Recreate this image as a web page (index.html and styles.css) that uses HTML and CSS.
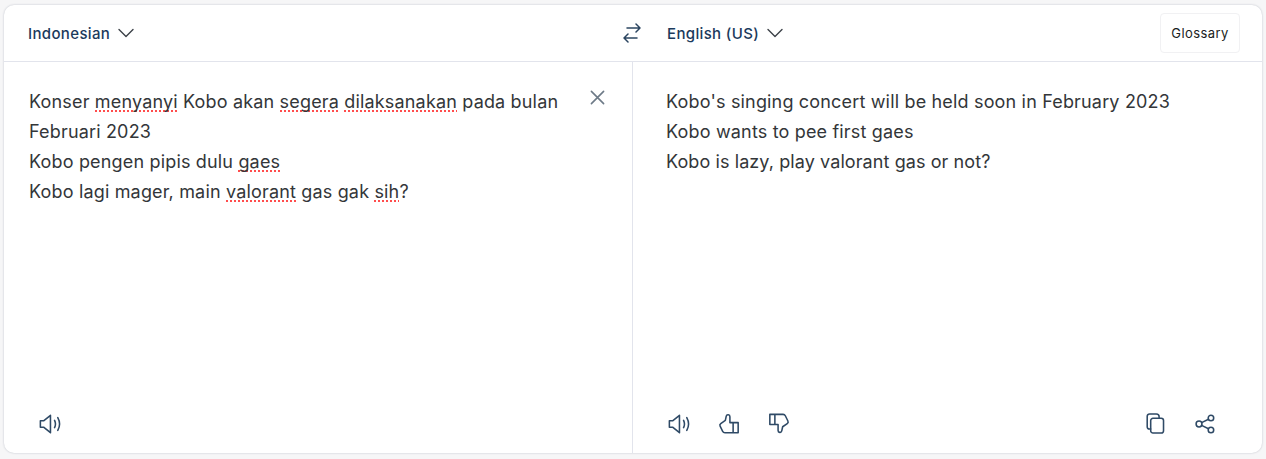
FILE: index.html
```html
<!DOCTYPE html>
<html lang="en">
<head>
<meta charset="utf-8">
<title>Translator</title>
<link rel="stylesheet" href="styles.css">
</head>
<body>
<main class="card">
  <header class="topbar">
    <div class="side side-source">
      <button class="lang">Indonesian
        <svg class="chev" viewBox="0 0 16 10"><path d="M1 1.500 8 8.500 15 1.500"/></svg>
      </button>
    </div>
    <button class="swap" aria-label="Swap languages">
      <svg viewBox="0 0 20 20"><path d="M5 5H18M14 1l4 4-4 4M15 15H2M6 11l-4 4 4 4"/></svg>
    </button>
    <div class="side side-target">
      <button class="lang">English (US)
        <svg class="chev" viewBox="0 0 16 10"><path d="M1 1.500 8 8.500 15 1.500"/></svg>
      </button>
      <button class="glossary">Glossary</button>
    </div>
  </header>
  <section class="panes">
    <div class="pane pane-source">
      <div class="source-row">
        <p class="text">Konser <span class="sp">menyanyi</span> Kobo akan <span class="sp">segera</span> <span class="sp">dilaksanakan</span> pada bulan Februari 2023<br>Kobo pengen pipis dulu <span class="sp">gaes</span><br>Kobo lagi mager, main <span class="sp">valorant</span> gas gak <span class="sp">sih</span>?</p>
        <button class="icon close" aria-label="Clear">
          <svg viewBox="0 0 16 16"><path d="M1.500 1.500 14.500 14.500M14.500 1.500 1.500 14.500"/></svg>
        </button>
      </div>
      <div class="tools">
        <button class="icon" aria-label="Listen"><svg viewBox="0 0 24 24"><path d="M1.500 8.500v7H5l7.500 6v-19L5 8.500zM17 8c1.200 2.500 1.200 5.500 0 8M20.500 5c2.400 4.300 2.400 9.700 0 14"/></svg></button>
      </div>
    </div>
    <div class="pane pane-target">
      <p class="text">Kobo's singing concert will be held soon in February 2023<br>Kobo wants to pee first gaes<br><span class="tight">Kobo is lazy, play valorant gas or not?</span></p>
      <div class="tools tools-target">
        <div class="tool-group">
          <button class="icon" aria-label="Listen"><svg viewBox="0 0 24 24"><path d="M1.500 8.500v7H5l7.500 6v-19L5 8.500zM17 8c1.200 2.500 1.200 5.500 0 8M20.500 5c2.400 4.300 2.400 9.700 0 14"/></svg></button>
          <button class="icon" aria-label="Good translation"><svg viewBox="0 0 24 24"><path d="M16.500 10.500H22v11h-5.500zM16.500 10.500H13V4c0-2.500-3.500-3-4-.5L8 8l-5 3.500c-1 .7-1.200 1.800-.7 2.800l2.800 5.700c.5 1 1.200 1.500 2.400 1.500h9"/></svg></button>
          <button class="icon" aria-label="Bad translation"><svg viewBox="0 0 24 24"><path transform="rotate(180 12 11.500)" d="M16.500 10.500H22v11h-5.500zM16.500 10.500H13V4c0-2.500-3.500-3-4-.5L8 8l-5 3.500c-1 .7-1.200 1.800-.7 2.800l2.800 5.700c.5 1 1.200 1.500 2.400 1.500h9"/></svg></button>
        </div>
        <div class="tool-group">
          <button class="icon" aria-label="Copy"><svg viewBox="0 0 24 24"><path d="M7.300 17.500H6A2.500 2.500 0 0 1 3.500 15V3.500A2.500 2.500 0 0 1 6 1h7.500a3 3 0 0 1 3 3v1.800"/><rect x="7.300" y="5.800" width="14" height="16" rx="2.500"/></svg></button>
          <button class="icon" aria-label="Share"><svg viewBox="0 0 24 24"><circle cx="5.500" cy="12" r="3.200"/><circle cx="18.500" cy="5.500" r="3"/><circle cx="18.500" cy="18.500" r="3"/><path d="M8.300 10.500 15.800 6.800M8.300 13.500 15.800 17.200"/></svg></button>
        </div>
      </div>
    </div>
  </section>
</main>
</body>
</html>
```
FILE: styles.css
```css
* { box-sizing: border-box; }
html, body { height: 100%; }
body {
  margin: 0;
  padding: 5px 4px 6px;
  background: #f6f6f7;
  font-family: Inter, "Liberation Sans", sans-serif;
  overflow: hidden;
}
button {
  border: 0;
  background: none;
  padding: 0;
  margin: 0;
  font: inherit;
  display: flex;
  align-items: center;
}
svg {
  fill: none;
  stroke: #2f4a66;
  stroke-width: 1.7;
  stroke-linecap: round;
  stroke-linejoin: round;
  display: block;
}
.card {
  height: 448px;
  background: #fff;
  border-radius: 10px;
  box-shadow: 0 0 2px rgba(50, 60, 90, .3);
  display: flex;
  flex-direction: column;
}
.topbar {
  height: 57px;
  flex: none;
  display: flex;
  align-items: center;
  border-bottom: 1px solid #e2e4ec;
}
.side { display: flex; align-items: center; }
.side-source { width: 612px; padding-left: 24px; }
.side-target { flex: 1; justify-content: space-between; padding-left: 19px; padding-right: 22px; }
.lang {
  gap: 8px;
  font-size: 15px;
  font-weight: 550;
  letter-spacing: .35px;
  color: #1b3a5c;
}
.chev { width: 16px; height: 10px; stroke: #3c4148; stroke-width: 1.4; }
.swap { width: 32px; justify-content: center; }
.swap svg { width: 20px; height: 20px; stroke: #2b4560; stroke-width: 1.5; }
.glossary {
  height: 40px;
  width: 80px;
  justify-content: center;
  border: 1px solid #f1f1f3;
  border-radius: 4px;
  font-size: 13px;
  letter-spacing: .4px;
  color: #1a1d22;
}
.panes { flex: 1; display: flex; min-height: 0; }
.pane { display: flex; flex-direction: column; justify-content: space-between; }
.pane-source {
  width: 629px;
  border-right: 1px solid #e2e4ec;
  padding: 25px 0 18px 25px;
}
.pane-target { flex: 1; padding: 25px 46px 18px 33px; }
.source-row { display: flex; justify-content: space-between; align-items: flex-start; padding-right: 24px; }
.text {
  margin: 0;
  font-size: 18px;
  line-height: 30px;
  letter-spacing: .17px;
  color: #333639;
}
.tight { letter-spacing: .09px; }
.pane-source .text { width: 540px; }
.sp {
  background: repeating-linear-gradient(90deg, #ff4d4d 0 2px, transparent 2px 4px) 0 100% / 100% 2px no-repeat;
}
.icon { width: 22px; height: 22px; justify-content: center; }
.icon svg { width: 22px; height: 22px; }
.close { margin-top: -1px; }
.close svg { width: 15px; height: 15px; stroke: #6d7a87; stroke-width: 1.7; }
.tools { display: flex; padding-left: 10px; }
.tools-target { justify-content: space-between; padding-left: 2px; }
.tool-group { display: flex; gap: 28px; }
```
